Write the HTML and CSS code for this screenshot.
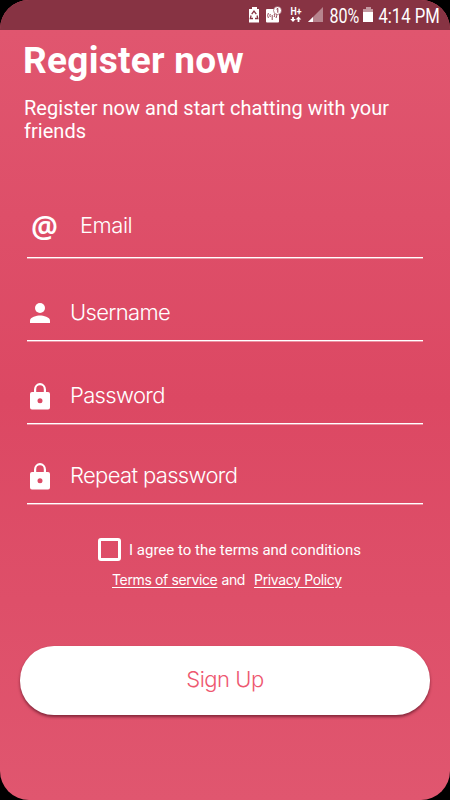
FILE: index.html
```html
<!DOCTYPE html>
<html lang="en">
<head>
<meta charset="utf-8">
<title>Register now</title>
<link rel="stylesheet" href="styles.css">
</head>
<body>
<div class="screen">
  <header class="status">
    <svg width="202" height="30" viewBox="0 0 202 30" fill="#fff">
      <path d="M4 7h5v2h2v13.500H1V9h3z"/>
      <path d="M3.700 14.200 6 11l2.300 3.200M9 15.500l.8 3H7M5 18.500H2.300l.8-3" fill="none" stroke="#873343" stroke-width="1.300"/>
      <rect x="18" y="9" width="13" height="13.5" rx="1"/>
      <path d="M20.400 13q-1.500 2.500 0 5M28 13q1.500 2.500 0 5M22.300 14q-.8 1.500 0 3M26.200 14q.8 1.500 0 3M24.200 15v5" fill="none" stroke="#873343" stroke-width=".9"/>
      <circle cx="29.500" cy="10.500" r="4" stroke="#873343" stroke-width=".6"/>
      <path d="M28.500 9.200l1.300-.8v4.300" fill="none" stroke="#873343"/>
      <text class="network" x="42.5" y="14.500" textLength="11" lengthAdjust="spacingAndGlyphs">H+</text>
      <path d="M45 22l-2.800-3h1.900v-2h1.800v2h1.900zM50.500 16.500l2.800 3h-1.900v2.500h-1.800v-2.500h-1.900z"/>
      <path d="M60 22 75 7v15z" opacity=".4"/>
      <path d="M60 22l5-5v5z"/>
      <g transform="translate(81.500 22.500) scale(.83 1)"><text textLength="36" lengthAdjust="spacingAndGlyphs">80%</text></g>
      <path d="M118 7h5v2h2v3h-10V9h3z" opacity=".5"/>
      <path d="M115 12h10v10h-10z"/>
      <g transform="translate(130.500 22.500) scale(.9 1)"><text textLength="68" lengthAdjust="spacingAndGlyphs">4:14 PM</text></g>
    </svg>
  </header>
  <main>
    <h1>Register now</h1>
    <p class="intro">Register now and start chatting with your friends</p>
    <form>
      <label class="field email"><span class="at">@</span><span>Email</span></label>
      <label class="field user">
        <svg class="icon" viewBox="0 0 20 20"><circle cx="10" cy="5" r="5"/><path d="M0 20v-2.500C0 14.200 6.700 12.500 10 12.500s10 1.700 10 5V20z"/></svg>
        <span>Username</span></label>
      <label class="field pass">
        <svg class="lock" viewBox="0 0 20 27"><path fill-rule="evenodd" d="M4 9V6.500a6 6.500 0 0 1 12 0V9h2a2 2 0 0 1 2 2v13.500a2 2 0 0 1-2 2H2a2 2 0 0 1-2-2V11a2 2 0 0 1 2-2zm2.200 0h7.600V6.500a3.800 4.200 0 0 0-7.600 0zM10 15.200a2.500 2.500 0 1 0 0 5 2.500 2.500 0 0 0 0-5z"/></svg>
        <span>Password</span></label>
      <label class="field repeat">
        <svg class="lock" viewBox="0 0 20 27"><path fill-rule="evenodd" d="M4 9V6.500a6 6.500 0 0 1 12 0V9h2a2 2 0 0 1 2 2v13.500a2 2 0 0 1-2 2H2a2 2 0 0 1-2-2V11a2 2 0 0 1 2-2zm2.200 0h7.600V6.500a3.800 4.200 0 0 0-7.600 0zM10 15.200a2.500 2.500 0 1 0 0 5 2.500 2.500 0 0 0 0-5z"/></svg>
        <span>Repeat password</span></label>
      <label class="agree"><span class="box"></span><span>I agree to the terms and conditions</span></label>
      <p class="links"><a class="terms">Terms of service</a><span class="and">and</span><a class="privacy">Privacy Policy</a></p>
      <button type="button">Sign Up</button>
    </form>
  </main>
</div>
</body>
</html>
```
FILE: styles.css
```css
* { box-sizing: border-box; }
body { margin: 0; background: #000; color: #fff; font-family: Roboto, sans-serif; }
.screen {
  width: 450px; height: 800px; overflow: hidden; border-radius: 29px;
  background: linear-gradient(#e0566f 30px, #dc4863 50%, #e0566f);
}
.status { height: 30px; background: #873343; display: flex; justify-content: flex-end; }
.status svg { display: block; }
.status text { font: 19.5px Roboto, sans-serif; }
.status .network { font: bold 10px Roboto, sans-serif; }
h1 { margin: 9px 0 0 23px; font-size: 37px; line-height: 44px; font-weight: 700; letter-spacing: .27px; white-space: nowrap; }
.intro { margin: 14px 0 0 24px; width: 390px; height: 47px; font-size: 20px; line-height: 23px; letter-spacing: .03px; }
form { display: flex; flex-direction: column; }
.field {
  margin: 0 27px; padding-left: 3px; display: flex; align-items: center;
  border-bottom: 1px solid #fff; box-shadow: 0 1px rgba(255, 255, 255, .4);
  font: 350 22px/28px Inter, sans-serif; letter-spacing: -.65px;
}
.icon, .lock { width: 20px; fill: #fff; margin-right: 20px; flex: none; }
.icon { height: 20px; }
.lock { height: 27px; }
.email { margin-top: 67px; height: 47px; padding-bottom: 17px; letter-spacing: -.5px; }
.user { margin-top: 40px; height: 43px; padding-bottom: 12px; }
.pass { margin-top: 40px; height: 43px; padding-bottom: 11px; }
.repeat { margin-top: 37px; height: 43px; padding-bottom: 11px; }
.email span:last-child { padding-bottom: 1px; }
.user span:last-child { padding-bottom: 3px; }
.pass span:last-child, .repeat span:last-child { padding-bottom: 3px; }
.at { width: 50px; padding: 2px 0 0 1px; font: 600 30px/28px "Noto Sans", sans-serif; letter-spacing: 0; }
.agree { display: flex; align-items: center; height: 23px; margin: 34px 0 0 98px; font-size: 15px; }
.box { width: 23px; height: 23px; border: 3px solid #fff; border-radius: 3px; margin-right: 8px; }
.links { display: flex; margin: 9px 0 0 112px; height: 20px; font: 14px/20px Inter, sans-serif; letter-spacing: -.36px; white-space: nowrap; }
.links a { text-decoration: underline; text-underline-offset: 2px; }
.and { margin: 0 9px 0 4px; }
button {
  margin: 56px 20px 0; height: 69px; padding: 0 0 4px; border: 0; border-radius: 34px; background: #fff; color: #ee5870;
  font: 300 22px/28px Inter, sans-serif; letter-spacing: -.5px; box-shadow: 0 2px 3px rgba(70, 10, 25, .6);
}
```
